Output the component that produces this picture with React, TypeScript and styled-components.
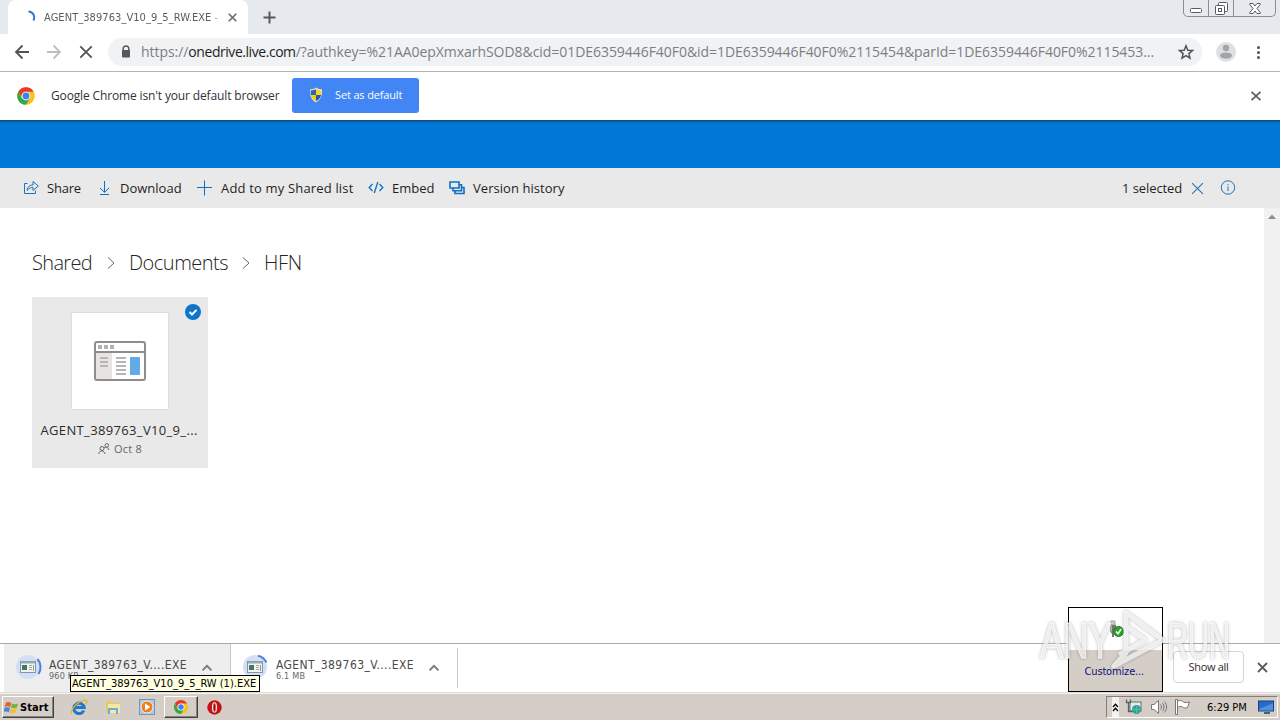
import React from "react";
import styled, { createGlobalStyle, css } from "styled-components";

const GlobalStyle = createGlobalStyle`
  * {
    box-sizing: border-box;
  }

  body {
    margin: 0;
    background: #ffffff;
    font-family: "Open Sans", "Noto Sans", sans-serif;
    overflow: hidden;
  }

  svg {
    display: block;
    flex: none;
  }
`;

const tahoma = css`
  font-family: "DejaVu Sans Condensed", "DejaVu Sans", sans-serif;
  font-stretch: condensed;
`;

const Screen = styled.div`
  position: relative;
  width: 1280px;
  height: 720px;
  display: flex;
  flex-direction: column;
  background: #ffffff;
  overflow: hidden;
`;

/* every caption has a fixed width, so the bars keep their rhythm */
const Caption = styled.span<{ $w: number; $ls?: number }>`
  flex: none;
  width: ${({ $w }) => $w}px;
  letter-spacing: ${({ $ls }) => $ls ?? 0}px;
  white-space: nowrap;
`;

const TabStrip = styled.header`
  height: 34px;
  flex: none;
  display: flex;
  justify-content: space-between;
  padding: 0 4px 0 8px;
  background: #e6e9ed;
`;

const Tabs = styled.div`
  display: flex;
  align-items: center;
  gap: 15px;
`;

const Tab = styled.div`
  width: 240px;
  height: 34px;
  display: flex;
  align-items: center;
  padding: 0 10px 0 14px;
  background: #ffffff;
  border-radius: 8px 8px 0 0;
`;

const TabTitle = styled(Caption)`
  ${tahoma}
  margin: 0 7px 0 8px;
  font-size: 11px;
  color: #5a5d61;
  mask-image: linear-gradient(to right, #000 95%, transparent);
`;

const WindowControls = styled.div`
  height: 17px;
  display: flex;
  border: 1px solid #8b8f94;
  border-top: 0;
  border-radius: 0 0 5px 5px;
`;

const WindowButton = styled.div<{ $w: number }>`
  width: ${({ $w }) => $w}px;
  display: flex;
  align-items: center;
  justify-content: center;

  & + & {
    border-left: 1px solid #8b8f94;
  }
`;

const Toolbar = styled.div`
  height: 38px;
  flex: none;
  display: flex;
  align-items: center;
  padding: 0 14px 2px;
  background: #ffffff;
  border-bottom: 1px solid #b5b5b5;
`;

const NavButtons = styled.div`
  display: flex;
  gap: 16px;
`;

const AddressBar = styled.div`
  width: 1094px;
  height: 28px;
  margin-left: 14px;
  display: flex;
  align-items: center;
  padding: 0 12px;
  border-radius: 14px;
  background: #f0f2f4;
`;

const Url = styled(Caption)`
  margin: 0 21px 0 9px;
  font-size: 14px;
  color: #7b7e83;

  b {
    font-weight: 400;
    letter-spacing: -0.45px;
    color: #1d1f22;
  }
`;

const ToolbarEnd = styled.div`
  display: flex;
  align-items: center;
  margin-left: 14px;
  gap: 14px;
`;

const InfoBar = styled.div`
  height: 48px;
  flex: none;
  display: flex;
  align-items: center;
  padding: 0 16px;
`;

const InfoText = styled(Caption)`
  margin: 0 13px 2px 15px;
  font-size: 12px;
  color: #303236;
`;

const DefaultButton = styled.button`
  width: 127px;
  height: 35px;
  margin-bottom: 2px;
  display: flex;
  align-items: center;
  padding: 0 16px;
  gap: 11px;
  border: 0;
  border-radius: 3px;
  background: #4285f4;
  color: #ffffff;
  font-family: inherit;
  font-size: 11px;
  text-align: left;
`;

const ButtonText = styled(Caption)`
  margin-bottom: 1px;
`;

const Push = styled.div`
  margin-left: auto;
`;

const Suite = styled.div`
  height: 48px;
  flex: none;
  background: linear-gradient(#174d7b 0 1px, #0b5ca8 1px 2px, #0070cc 2px 4px, #0078d7 4px);
`;

const CommandBar = styled.nav`
  height: 40px;
  flex: none;
  display: flex;
  align-items: center;
  padding: 0 44px 0 23px;
  background: #e9e9e9;
  color: #1f1f1f;
  font-size: 13px;
`;

const Command = styled.div<{ $after?: number }>`
  display: flex;
  align-items: center;
  gap: 8px;
  margin-right: ${({ $after }) => $after ?? 0}px;
`;

const Content = styled.main`
  flex: 1;
  display: flex;
  justify-content: space-between;
`;

const Files = styled.section`
  padding: 38px 32px 0;
`;

const Breadcrumb = styled.div`
  height: 32px;
  display: flex;
  align-items: center;
  font-size: 20px;
  font-weight: 300;
  color: #242424;

  svg {
    margin: 2px 14px 0 15px;
  }
`;

const Tile = styled.article`
  position: relative;
  width: 176px;
  height: 171px;
  margin-top: 19px;
  padding-top: 16px;
  display: flex;
  flex-direction: column;
  align-items: center;
  background: #e9e9e9;
`;

const Thumb = styled.div`
  width: 96px;
  height: 96px;
  flex: none;
  display: flex;
  align-items: center;
  justify-content: center;
  background: #ffffff;
  box-shadow: 0 0 2px rgba(0, 0, 0, 0.15);
`;

const Check = styled.div`
  position: absolute;
  top: 7px;
  right: 7px;
`;

const TileName = styled(Caption)`
  margin-top: 12px;
  font-size: 13px;
  line-height: 18px;
  color: #2b2b2b;
`;

const TileDate = styled.div`
  display: flex;
  align-items: center;
  gap: 4px;
  margin-top: 2px;
  font-size: 11px;
  line-height: 16px;
  color: #666666;
`;

const Scrollbar = styled.div`
  width: 16px;
  background: #f1f1f1;
  padding: 6px 4px;
`;

const Shelf = styled.footer`
  height: 49px;
  flex: none;
  display: flex;
  align-items: center;
  padding: 0 11px 0 4px;
  border-top: 1px solid #aaaaaa;
`;

const Download = styled.div<{ $active?: boolean }>`
  width: 227px;
  height: ${({ $active }) => ($active ? 48 : 40)}px;
  display: flex;
  align-items: center;
  padding: 0 17px 0 11px;
  background: ${({ $active }) => ($active ? "#eeeeee" : "#ffffff")};
  border-right: 1px solid #c9c9c9;
`;

const DownloadText = styled.div`
  ${tahoma}
  display: flex;
  flex-direction: column;
  margin: 3px 14px 0 6px;
  font-size: 12px;
  line-height: 13px;
  color: #4a4a4a;

  small {
    font-size: 9px;
    line-height: 9px;
    letter-spacing: 0.2px;
    color: #666666;
  }
`;

const ShowAll = styled.button`
  width: 71px;
  height: 32px;
  margin: 0 12px 2px auto;
  padding: 0 0 1px;
  border: 1px solid #d5d5d5;
  border-radius: 4px;
  background: #ffffff;
  font-family: inherit;
  font-size: 11px;
  letter-spacing: -0.3px;
  color: #2b2b2b;
`;

const Taskbar = styled.div`
  ${tahoma}
  height: 28px;
  flex: none;
  display: flex;
  align-items: flex-end;
  justify-content: space-between;
  padding: 0 2px 2px;
  background: #d5cec7;
  border-top: 1px solid #dedad5;
  box-shadow: inset 0 1px #f7f5f3;
  font-size: 11px;
  color: #000000;
`;

const raised = css`
  border: 1px solid;
  border-color: #ffffff #404040 #404040 #ffffff;
  box-shadow: inset -1px -1px #89847e;
`;

const StartButton = styled.div`
  ${raised}
  width: 52px;
  height: 22px;
  display: flex;
  align-items: center;
  padding-left: 1px;
  gap: 1px;
  font-weight: 700;
`;

const QuickLaunch = styled.div`
  display: flex;
  align-items: center;
`;

const Launcher = styled.div<{ $open?: boolean; $w?: number }>`
  width: ${({ $w }) => $w ?? 34}px;
  height: 22px;
  display: flex;
  align-items: center;
  justify-content: center;
  ${({ $open }) => $open && raised}
`;

const Tray = styled.div`
  width: 172px;
  height: 22px;
  display: flex;
  align-items: center;
  padding: 0 2px 0 5px;
  border: 1px solid;
  border-color: #857f78 #ffffff #ffffff #857f78;
`;

const TrayToggle = styled.div`
  width: 10px;
  height: 20px;
  margin-right: 6px;
  display: flex;
  align-items: center;
  justify-content: center;
  background: #f4f2f0;
`;

const Tooltip = styled.div`
  ${tahoma}
  position: absolute;
  left: 70px;
  top: 675px;
  width: 190px;
  height: 17px;
  padding-left: 1px;
  border: 1px solid #000000;
  background: #ffffe1;
  font-size: 11px;
  line-height: 15px;
`;

const TrayMenu = styled.div`
  ${tahoma}
  position: absolute;
  left: 1068px;
  top: 607px;
  width: 95px;
  height: 85px;
  display: flex;
  flex-direction: column;
  border: 1px solid #000000;
  background: #ffffff;
  font-size: 11px;
  color: #10107a;
`;

const TrayMenuIcons = styled.div`
  height: 42px;
  display: flex;
  align-items: center;
  justify-content: center;
`;

const Customize = styled.div`
  flex: 1;
  display: flex;
  align-items: center;
  justify-content: center;
  padding: 2px 2px 0 0;
  background: #d5cec7;
`;

const Watermark = styled.div`
  position: absolute;
  left: 1040px;
  top: 604px;
  width: 200px;
  height: 70px;
  display: flex;
  align-items: center;
  font-family: "Liberation Sans", Arial, sans-serif;
  font-size: 50px;
  color: rgba(255, 255, 255, 0.7);
  filter: drop-shadow(0 0 1.5px rgba(0, 0, 0, 0.38));
  pointer-events: none;
`;

const WatermarkWord = styled.span<{ $squeeze: number; $w: number }>`
  width: ${({ $w }) => $w}px;
  margin-top: 4px;
  white-space: nowrap;
  transform: scaleX(${({ $squeeze }) => $squeeze});
  transform-origin: left;
  -webkit-text-stroke: 1.5px rgba(255, 255, 255, 0.6);
`;

type CrossProps = { size: number; color: string; width?: number };

const Cross = ({ size, color, width = 1.8 }: CrossProps) => (
  <svg width={size} height={size} viewBox="0 0 10 10" stroke={color} strokeWidth={width}>
    <path d="M.8 .8L9.2 9.2M9.2 .8L.8 9.2" />
  </svg>
);

const ChromeLogo = ({ size }: { size: number }) => (
  <svg width={size} height={size} viewBox="0 0 48 48">
    <circle cx="24" cy="24" r="21" fill="#fbc116" />
    <path d="M5.8 13.5A21 21 0 0 0 24 45L33 29.2L24 24L14 29.8Z" fill="#2da94f" />
    <path d="M5.8 13.5A21 21 0 0 1 42.2 13.5H24A10.5 10.5 0 0 0 14 21L13 26Z" fill="#e33b2e" />
    <circle cx="24" cy="24" r="10.5" fill="#fff" />
    <circle cx="24" cy="24" r="8.2" fill="#3f7fee" />
  </svg>
);

const Shield = () => (
  <svg width="16" height="16" viewBox="0 0 16 16">
    <path d="M8 .5C10 2 12 2.3 14 2.3C14.6 8.5 12.4 13.2 8 15.5C3.6 13.2 1.4 8.5 2 2.3C4 2.3 6 2 8 .5Z" fill="#e9e6cc" />
    <path d="M8 2V8H2.8C2.6 6.5 2.6 5 2.8 3.4C5 3.3 6.5 3 8 2Z" fill="#2867b8" />
    <path d="M8 2V8H13.2C13.4 6.5 13.4 5 13.2 3.4C11 3.3 9.5 3 8 2Z" fill="#f9d22d" />
    <path d="M8 8V14.3C5.2 12.8 3.4 10.5 2.8 8Z" fill="#f9c91f" />
    <path d="M8 8V14.3C10.8 12.8 12.6 10.5 13.2 8Z" fill="#245ca8" />
  </svg>
);

const Progress = ({ arc }: { arc: string }) => (
  <svg width="28" height="28" viewBox="0 0 28 28">
    <circle cx="13" cy="13" r="12" fill="#d3dff5" />
    <path d={arc} fill="none" stroke="#4b82dd" strokeWidth="2" />
    <rect x="5.5" y="7.5" width="15" height="11" fill="#f2f2f0" stroke="#8794a3" />
    <path d="M6 8.5H20" stroke="#9aaaba" strokeWidth="2" />
    <rect x="7" y="11" width="5" height="5" fill="#3c7966" />
    <path d="M14 11.5H17M14 13.5H17M14 15.5H17" stroke="#a6a6a6" />
    <path d="M18.5 11V17" stroke="#75a982" />
  </svg>
);

const Caret = () => (
  <svg width="12" height="8" viewBox="0 0 12 8" fill="none" stroke="#777777" strokeWidth="1.8">
    <path d="M1.5 6.3L6 1.8L10.5 6.3" />
  </svg>
);

const App: React.FC = () => (
  <>
    <GlobalStyle />
    <Screen>
      <TabStrip>
        <Tabs>
          <Tab>
            <svg width="14" height="14" viewBox="0 0 14 14" fill="none" stroke="#3b6fd4" strokeWidth="2">
              <path d="M6.5 1.5C11 1.8 13.5 6 11.5 10.5" />
            </svg>
            <TabTitle $w={177} $ls={0.06}>
              AGENT_389763_V10_9_5_RW.EXE -
            </TabTitle>
            <Cross size={9} color="#66696d" />
          </Tab>
          <svg width="13" height="13" viewBox="0 0 13 13" stroke="#55585c" strokeWidth="2">
            <path d="M6.5 .5V12.5M.5 6.5H12.5" />
          </svg>
        </Tabs>
        <WindowControls>
          <WindowButton $w={24}>
            <svg width="12" height="5" viewBox="0 0 12 5" style={{ marginTop: 5 }}>
              <rect x=".5" y=".5" width="11" height="4" rx="1" fill="#fff" stroke="#555b62" />
            </svg>
          </WindowButton>
          <WindowButton $w={25}>
            <svg width="13" height="13" viewBox="0 0 13 13" fill="#fff" stroke="#555b62">
              <rect x="3.5" y=".5" width="9" height="9" rx="1" />
              <rect x=".5" y="3.5" width="9" height="9" rx="1" />
              <rect x="3.5" y="6.5" width="3" height="3" />
            </svg>
          </WindowButton>
          <WindowButton $w={42}>
            <svg width="12" height="11" viewBox="0 0 12 11" fill="#fff" stroke="#555b62">
              <path d="M.8 .5H4L6 3L8 .5H11.2V1.5L8 5.5L11.2 9.5V10.5H8L6 8L4 10.5H.8V9.5L4 5.5L.8 1.5Z" />
            </svg>
          </WindowButton>
        </WindowControls>
      </TabStrip>

      <Toolbar>
        <NavButtons>
          <svg width="16" height="16" viewBox="0 0 16 16" fill="none" stroke="#505357" strokeWidth="1.8">
            <path d="M15 8H2M8.5 1.5L2 8L8.5 14.5" />
          </svg>
          <svg width="16" height="16" viewBox="0 0 16 16" fill="none" stroke="#bcbec0" strokeWidth="1.8">
            <path d="M1 8H14M7.5 1.5L14 8L7.5 14.5" />
          </svg>
          <svg width="16" height="16" viewBox="0 0 16 16" stroke="#505357" strokeWidth="1.8">
            <path d="M2.3 2.3L13.7 13.7M13.7 2.3L2.3 13.7" />
          </svg>
        </NavButtons>
        <AddressBar>
          <svg width="12" height="14" viewBox="0 0 12 14">
            <path d="M3.2 6V3.7A2.8 2.8 0 0 1 8.8 3.7V6" fill="none" stroke="#55585c" strokeWidth="1.5" />
            <rect x="2" y="5" width="8" height="7.5" rx="1" fill="#55585c" />
          </svg>
          <Url $w={1016} $ls={-0.05}>
            https://<b>onedrive.live.com</b>
            /?authkey=%21AA0epXmxarhSOD8&amp;cid=01DE6359446F40F0&amp;id=1DE6359446F40F0%2115454&amp;parId=1DE6359446F40F0%2115453...
          </Url>
          <svg width="16" height="16" viewBox="0 0 16 16" fill="none" stroke="#505357" strokeWidth="1.5">
            <path d="M8 1.8L9.8 6.2L14.5 6.5L10.9 9.6L12 14.2L8 11.7L4 14.2L5.1 9.6L1.5 6.5L6.2 6.2Z" />
          </svg>
        </AddressBar>
        <ToolbarEnd>
          <svg width="20" height="20" viewBox="0 0 20 20">
            <circle cx="10" cy="10" r="10" fill="#dfe0e1" />
            <circle cx="10" cy="6" r="3.2" fill="#a2a4a7" />
            <ellipse cx="10" cy="13.6" rx="6" ry="3.2" fill="#a2a4a7" />
          </svg>
          <svg width="16" height="16" viewBox="0 0 16 16" fill="#505357">
            <circle cx="8.5" cy="3.5" r="1.5" />
            <circle cx="8.5" cy="8.5" r="1.5" />
            <circle cx="8.5" cy="13.5" r="1.5" />
          </svg>
        </ToolbarEnd>
      </Toolbar>

      <InfoBar>
        <ChromeLogo size={20} />
        <InfoText $w={228} $ls={-0.14}>
          Google Chrome isn't your default browser
        </InfoText>
        <DefaultButton>
          <Shield />
          <ButtonText $w={68} $ls={-0.15}>
            Set as default
          </ButtonText>
        </DefaultButton>
        <Push>
          <svg width="16" height="10" viewBox="0 0 16 10" stroke="#616161" strokeWidth="1.8">
            <path d="M3.5 .8L12.5 9.2M12.5 .8L3.5 9.2" />
          </svg>
        </Push>
      </InfoBar>

      <Suite />

      <CommandBar>
        <Command $after={15}>
          <svg width="16" height="16" viewBox="0 0 16 16" fill="none" stroke="#2470b8">
            <path d="M4.5 3.5H1.5V13.5H12.5V10.5M4.2 10.5C4.5 6.5 7 5 10 5V1.5L15.3 6L10 10.5V7.5C7.5 7.5 5.5 8.5 4.2 10.5Z" />
          </svg>
          <Caption $w={34} $ls={-0.2}>
            Share
          </Caption>
        </Command>
        <Command $after={15}>
          <svg width="16" height="16" viewBox="0 0 16 16" fill="none" stroke="#0f6fc4">
            <path d="M8.5 1V12M4 8L8.5 12.3L13 8M4 14.5H13" />
          </svg>
          <Caption $w={62}>Download</Caption>
        </Command>
        <Command $after={15}>
          <svg width="16" height="16" viewBox="0 0 16 16" stroke="#0f6fc4">
            <path d="M7.5 .5V15.5M0 7.5H15" />
          </svg>
          <Caption $w={132} $ls={0.17}>
            Add to my Shared list
          </Caption>
        </Command>
        <Command $after={14}>
          <svg width="16" height="16" viewBox="0 0 16 16" fill="none" stroke="#0f6fc4" strokeWidth="1.3">
            <path d="M4.5 4L1.2 7.5L4.5 11M11.5 4L14.8 7.5L11.5 11M9.8 2L6.3 13" />
          </svg>
          <Caption $w={43}>Embed</Caption>
        </Command>
        <Command>
          <svg width="16" height="16" viewBox="0 0 16 16" fill="#e9e9e9" stroke="#0f6fc4" strokeWidth="1.6">
            <path d="M6 7.5H15V13.5H6Z" />
            <path d="M4 4.8H12.5V10.8H4Z" />
            <path d="M1 2H10V8H1Z" />
          </svg>
          <Caption $w={92} $ls={0.05}>
            Version history
          </Caption>
        </Command>
        <Push>
          <Command>
            <Caption $w={61} $ls={-0.08}>
              1 selected
            </Caption>
            <Cross size={13} color="#2470b8" width={0.8} />
            <svg width="16" height="16" viewBox="0 0 16 16" fill="none" stroke="#2470b8" style={{ marginLeft: 8 }}>
              <circle cx="8" cy="7.5" r="6.7" />
              <path d="M8 6.5V11M8 4V5.3" />
            </svg>
          </Command>
        </Push>
      </CommandBar>

      <Content>
        <Files>
          <Breadcrumb>
            <Caption $w={60} $ls={-0.65}>
              Shared
            </Caption>
            <svg width="8" height="14" viewBox="0 0 8 14" fill="none" stroke="#666">
              <path d="M1 1.5L7 7L1 12.5" />
            </svg>
            <Caption $w={98} $ls={-0.5}>
              Documents
            </Caption>
            <svg width="8" height="14" viewBox="0 0 8 14" fill="none" stroke="#666">
              <path d="M1 1.5L7 7L1 12.5" />
            </svg>
            <Caption $w={38} $ls={-0.3}>
              HFN
            </Caption>
          </Breadcrumb>
          <Tile>
            <Thumb>
              <svg width="52" height="40" viewBox="0 0 52 40">
                <rect x="1" y="1" width="50" height="38" rx="2" fill="#fff" />
                <rect x="2" y="12" width="16" height="26" fill="#e8e4e1" />
                <rect x="1" y="1" width="50" height="38" rx="2" fill="none" stroke="#8f8c8b" strokeWidth="2" />
                <path d="M1 11H51" stroke="#8f8c8b" strokeWidth="2" />
                <path d="M4 6H8M10 6H14M16 6H20" stroke="#b3b0ae" strokeWidth="4" />
                <path d="M6 17H14M6 21H14M6 25H14M22 17H32M22 21H32M22 25H32M22 29H32M22 33H32" stroke="#b8b5b3" strokeWidth="2" />
                <rect x="36" y="16" width="10" height="18" rx="1" fill="#60abe8" />
              </svg>
            </Thumb>
            <Check>
              <svg width="16" height="16" viewBox="0 0 16 16">
                <circle cx="8" cy="8" r="8" fill="#0f74cc" />
                <path d="M4.5 8L7 10.5L11.6 5.9" fill="none" stroke="#fff" strokeWidth="2" />
              </svg>
            </Check>
            <TileName $w={159} $ls={0.35}>
              AGENT_389763_V10_9_...
            </TileName>
            <TileDate>
              <svg width="12" height="12" viewBox="0 0 12 12" fill="none" stroke="#666">
                <circle cx="4" cy="5.5" r="2" />
                <path d="M.8 11C1 7 6.5 7 7 11M6 5C7 3.8 10.3 3.8 10.8 7" />
                <circle cx="8.8" cy="2.4" r="1.8" />
              </svg>
              <Caption $w={28} $ls={0.2}>
                Oct 8
              </Caption>
            </TileDate>
          </Tile>
        </Files>
        <Scrollbar>
          <svg width="8" height="5" viewBox="0 0 8 5" fill="#8d8d8d">
            <path d="M0 5L4 .5L8 5Z" />
          </svg>
        </Scrollbar>
      </Content>

      <Shelf>
        <Download $active>
          <Progress arc="M22.5 5A12.5 12.5 0 0 1 23.5 20" />
          <DownloadText>
            <Caption $w={138} $ls={0.4}>
              AGENT_389763_V....EXE
            </Caption>
            <small>960 KB</small>
          </DownloadText>
          <Caret />
        </Download>
        <Download>
          <Progress arc="M16 1.7A12.5 12.5 0 0 1 24.5 8.5" />
          <DownloadText>
            <Caption $w={138} $ls={0.4}>
              AGENT_389763_V....EXE
            </Caption>
            <small>6.1 MB</small>
          </DownloadText>
          <Caret />
        </Download>
        <ShowAll>Show all</ShowAll>
        <svg width="13" height="11" viewBox="0 0 13 11" stroke="#5c5c5c" strokeWidth="1.8" style={{ marginBottom: 2 }}>
          <path d="M2 1L11 10M11 1L2 10" />
        </svg>
      </Shelf>

      <Taskbar>
        <QuickLaunch>
          <StartButton>
            <svg width="15" height="15" viewBox="0 0 16 16">
              <path d="M2 3C4 1.8 6 2 7.8 3.2L6.6 7.7C5 6.6 3 6.4 .8 7.4Z" fill="#e8602b" />
              <path d="M8.6 3.6C10.5 4.8 12.6 4.6 15 3.4L13.8 8C11.6 9 9.4 9 7.4 8.1Z" fill="#72b63a" />
              <path d="M.6 8.3C2.8 7.4 4.8 7.5 6.4 8.6L5.2 13C3.5 12 1.6 11.8 -.4 12.8Z" fill="#3c8ad8" />
              <path d="M7.2 9C9.2 10 11.4 9.9 13.6 8.9L12.4 13.4C10.2 14.4 8 14.3 6 13.4Z" fill="#f6bf2c" />
            </svg>
            <Caption $w={31} $ls={0.1}>
              Start
            </Caption>
          </StartButton>
          <Launcher style={{ marginLeft: 8 }}>
            <svg width="18" height="17" viewBox="0 0 18 17" fill="none">
              <path d="M13.8 11.5A5.2 5.2 0 1 1 14.2 8.6H5" stroke="#1f78c8" strokeWidth="3" />
              <path d="M2 15C-1 13 6 3 14 1.3C17.5 .6 17.4 3 15.8 5" stroke="#e5b32a" strokeWidth="1.3" />
            </svg>
          </Launcher>
          <Launcher>
            <svg width="16" height="16" viewBox="0 0 16 16">
              <path d="M1 2H6L7 3.5H14V14H1Z" fill="#e7c96b" />
              <path d="M3 5H15V14H3Z" fill="#f7e6a4" />
              <path d="M4 15V10H12V15" fill="none" stroke="#69aee0" strokeWidth="2" />
            </svg>
          </Launcher>
          <Launcher>
            <svg width="16" height="16" viewBox="0 0 16 16">
              <rect x=".5" y=".5" width="15" height="15" fill="#a9cbe9" stroke="#6b96bd" />
              <circle cx="8" cy="8" r="6" fill="#f08019" stroke="#fff" strokeWidth=".8" />
              <path d="M6 4.5L11.5 8L6 11.5Z" fill="#fff" />
            </svg>
          </Launcher>
          <Launcher $open>
            <ChromeLogo size={16} />
          </Launcher>
          <Launcher $w={33}>
            <svg width="15" height="15" viewBox="0 0 15 15">
              <circle cx="7.5" cy="7.5" r="7.2" fill="#c51219" />
              <ellipse cx="7.5" cy="7.5" rx="2.6" ry="5.2" fill="#f7e3e1" />
              <ellipse cx="7.5" cy="7.5" rx="1.2" ry="4.2" fill="#a50d13" />
            </svg>
          </Launcher>
        </QuickLaunch>
        <Tray>
          <TrayToggle>
            <svg width="7" height="9" viewBox="0 0 7 9" fill="none" stroke="#000" strokeWidth="1.3">
              <path d="M1 4L3.5 1.3L6 4M1 8L3.5 5.3L6 8" />
            </svg>
          </TrayToggle>
          <svg width="17" height="16" viewBox="0 0 17 16">
            <rect x="5" y="3" width="11" height="9" fill="#dff1ef" stroke="#5d6e75" />
            <path d="M1.5 .5V3.5H5.5V.5M3.5 3.5V12.5H8" fill="none" stroke="#5b6164" strokeWidth="1.3" />
            <circle cx="11.5" cy="10.5" r="4.5" fill="#34a393" />
            <path d="M8 10.5H15M11.5 7V14" stroke="#5dbcae" />
          </svg>
          <svg width="18" height="16" viewBox="0 0 18 16" fill="none" stroke="#777" style={{ marginLeft: 8 }}>
            <path d="M1.5 5.5H4L8.5 1.5V14.5L4 10.5H1.5Z" fill="#fff" />
            <path d="M10.5 5.5C11.8 7 11.8 9 10.5 10.5M12.5 4C14.5 6.5 14.5 9.5 12.5 12M14.5 2.5C17.3 6 17.3 10 14.5 13.5" />
          </svg>
          <svg width="17" height="16" viewBox="0 0 17 16" fill="#fff" stroke="#777" style={{ marginLeft: 6 }}>
            <path d="M1.5 .5H3.5V15.5H1.5Z" />
            <path d="M3.5 2C6 1 8 1.5 9.5 3C11.5 4 13.5 3.5 15.5 3L13.5 8.5C11 9.5 9.5 9 8.5 8C6.5 7 5 7.5 3.5 8.5Z" />
          </svg>
          <Caption $w={40} style={{ marginLeft: 16 }}>
            6:29 PM
          </Caption>
          <svg width="17" height="15" viewBox="0 0 17 15" style={{ marginLeft: 11 }}>
            <rect x=".5" y="1" width="15" height="10" fill="#276bc4" stroke="#17407d" />
            <path d="M1 9L15 3V10.5H1Z" fill="#4c92e2" />
            <path d="M6 13H12" stroke="#52606e" strokeWidth="2" />
          </svg>
        </Tray>
      </Taskbar>

      <Tooltip>
        <Caption $w={186}>AGENT_389763_V10_9_5_RW (1).EXE</Caption>
      </Tooltip>

      <TrayMenu>
        <TrayMenuIcons>
          <svg width="18" height="18" viewBox="0 0 18 18">
            <path d="M3 5H9V11L7 14V17H5V14L3 11Z" fill="#777078" />
            <path d="M4 1H8V5H4Z" fill="#d6d2d8" stroke="#918b94" strokeWidth=".8" />
            <path d="M3 5H5V12L3 10Z" fill="#b5afb8" />
            <circle cx="11.5" cy="11.5" r="5" fill="#2da32d" stroke="#168216" />
            <path d="M9 11.5L11 13.8L14.2 9" fill="none" stroke="#fff" strokeWidth="1.6" />
          </svg>
        </TrayMenuIcons>
        <Customize>
          <Caption $w={60} $ls={-0.15}>
            Customize...
          </Caption>
        </Customize>
      </TrayMenu>

      <Watermark>
        <WatermarkWord $squeeze={0.7} $w={71}>
          ANY
        </WatermarkWord>
        <svg width="56" height="60" viewBox="0 0 56 60" fill="none" stroke="rgba(255,255,255,.75)" strokeWidth="5" strokeLinejoin="round">
          <path d="M15 4L52 31L3 57L15 44V4ZM15 17L34 31L8 46" />
        </svg>
        <WatermarkWord $squeeze={0.58} $w={66}>
          RUN
        </WatermarkWord>
      </Watermark>
    </Screen>
  </>
);

export default App;
